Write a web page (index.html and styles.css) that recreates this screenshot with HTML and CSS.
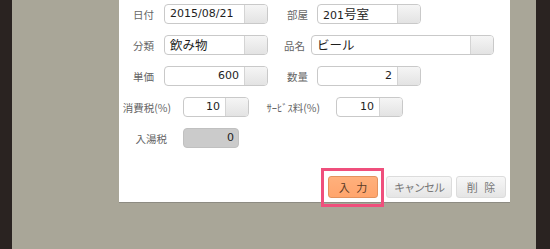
FILE: index.html
```html
<!DOCTYPE html>
<html lang="ja">
  <head>
    <meta charset="UTF-8" />
    <meta name="viewport" content="width=device-width, initial-scale=1.0" />
    <title>明細入力</title>
    <link rel="stylesheet" href="styles.css">
  </head>
  <body>
    <div class="stage">
      <div class="panel">
        <!-- 日付 / 部屋 -->
        <div class="row">
          <span class="label w45 pr10">日付</span>
          <div class="field w104">
            <span class="field-text">2015/08/21</span>
            <span class="field-btn"></span>
          </div>
          <span class="label w49 pr9">部屋</span>
          <div class="field w104">
            <span class="field-text">201<span class="jp">号室</span></span>
            <span class="field-btn"></span>
          </div>
        </div>

        <!-- 分類 / 品名 -->
        <div class="row">
          <span class="label w45 pr10">分類</span>
          <div class="field w104">
            <span class="field-text"><span class="jp">飲み物</span></span>
            <span class="field-btn"></span>
          </div>
          <span class="label w43 pr6">品名</span>
          <div class="field w183">
            <span class="field-text"><span class="jp">ビール</span></span>
            <span class="field-btn"></span>
          </div>
        </div>

        <!-- 単価 / 数量 -->
        <div class="row">
          <span class="label w45 pr10">単価</span>
          <div class="field w104">
            <span class="field-text num">600</span>
            <span class="field-btn"></span>
          </div>
          <span class="label w49 pr9">数量</span>
          <div class="field w104">
            <span class="field-text num">2</span>
            <span class="field-btn"></span>
          </div>
        </div>

        <!-- 税率 -->
        <div class="row">
          <span class="label w64 pr12">消費税(%)</span>
          <div class="field w66">
            <span class="field-text num">10</span>
            <span class="field-btn"></span>
          </div>
          <span class="label w87 pr16">ｻｰﾋﾞｽ料(%)</span>
          <div class="field w67">
            <span class="field-text num">10</span>
            <span class="field-btn"></span>
          </div>
        </div>

        <!-- 入湯税 (read only) -->
        <div class="row">
          <span class="label w64 pr16">入湯税</span>
          <div class="field w56 disabled">
            <span class="field-text num">0</span>
          </div>
        </div>

        <div class="actions">
          <div class="focus-ring">
            <button class="btn btn-primary">入 力</button>
          </div>
          <button class="btn btn-cancel">キャンセル</button>
          <button class="btn btn-delete">削 除</button>
        </div>
      </div>
    </div>
  </body>
</html>
```

FILE: styles.css
```css
/* Page background */
body {
  margin: 0;
  height: 249px;
  overflow: hidden;
  background-color: #2a2321;
  font-family: "DejaVu Sans", "Noto Sans CJK JP", sans-serif;
}

.stage {
  margin-left: 12px;
  width: 524px;
  height: 249px;
  padding-left: 107px;
  box-sizing: border-box;
  background-color: #a9a698;
}

/* White dialog */
.panel {
  width: 391px;
  height: 202px;
  box-sizing: border-box;
  padding: 4px 4px 4px 0;
  background-color: #fff;
  box-shadow: 0 1px 0 #8d8b82;
  display: flex;
  flex-direction: column;
  gap: 11px;
}

.row {
  display: flex;
  align-items: center;
  height: 20px;
}

/* Labels */
.label {
  flex: none;
  box-sizing: border-box;
  text-align: right;
  white-space: nowrap;
  font-family: "Noto Sans CJK JP", sans-serif;
  font-size: 10.5px;
  color: #666;
}

.w43 { width: 43px; }
.w45 { width: 45px; }
.w49 { width: 49px; }
.w64 { width: 64px; }
.w87 { width: 87px; }
.pr6 { padding-right: 6px; }
.pr9 { padding-right: 9px; }
.pr10 { padding-right: 10px; }
.pr12 { padding-right: 12px; }
.pr16 { padding-right: 16px; }

/* Combo fields */
.field {
  flex: none;
  display: flex;
  height: 20px;
  box-sizing: border-box;
  border: 1px solid #c9c9c9;
  border-radius: 4px;
  overflow: hidden;
  background-color: #fff;
}

.w56 { width: 56px; }
.w66 { width: 66px; }
.w67 { width: 67px; }
.w104 { width: 104px; }
.w183 { width: 183px; }

.field-text {
  flex: 1;
  padding: 0 5px;
  font-size: 11px;
  line-height: 18px;
  color: #1e1e1e;
  white-space: nowrap;
}

.field-text .jp {
  font-family: "Noto Sans CJK JP", sans-serif;
  font-size: 12.5px;
}

.field-text.num {
  text-align: right;
}

.field-btn {
  flex: none;
  width: 22px;
  border-left: 1px solid #d4d4d4;
  background: linear-gradient(#f5f5f5, #e3e3e3);
}

.field.disabled {
  background-color: #cbcbcb;
  border-color: #c0c0c0;
}

.field.disabled .field-text {
  padding-right: 4px;
}

/* Buttons */
.actions {
  margin-top: 17px;
  display: flex;
  justify-content: flex-end;
  align-items: center;
  height: 22px;
}

.focus-ring {
  position: relative;
}

.focus-ring::after {
  content: "";
  position: absolute;
  left: -7px;
  top: -8px;
  right: -6px;
  bottom: -9px;
  border: 3px solid #ef4f7c;
}

.btn {
  height: 22px;
  padding: 0;
  box-sizing: border-box;
  border-radius: 3px;
  font-family: "Noto Sans CJK JP", sans-serif;
  font-size: 11px;
  line-height: 20px;
  word-spacing: 4px;
  cursor: pointer;
}

.btn-primary {
  display: block;
  width: 50px;
  border: 1px solid #e3925e;
  background: linear-gradient(#ffb07c, #ffa56d);
  color: #5b3b26;
}

.btn-cancel,
.btn-delete {
  border: 1px solid #dcdcdc;
  background: linear-gradient(#f7f7f7, #e5e5e5);
  color: #777;
}

.btn-cancel {
  width: 66px;
  margin-left: 8px;
  letter-spacing: -1px;
}

.btn-delete {
  width: 50px;
  margin-left: 4px;
}
```
